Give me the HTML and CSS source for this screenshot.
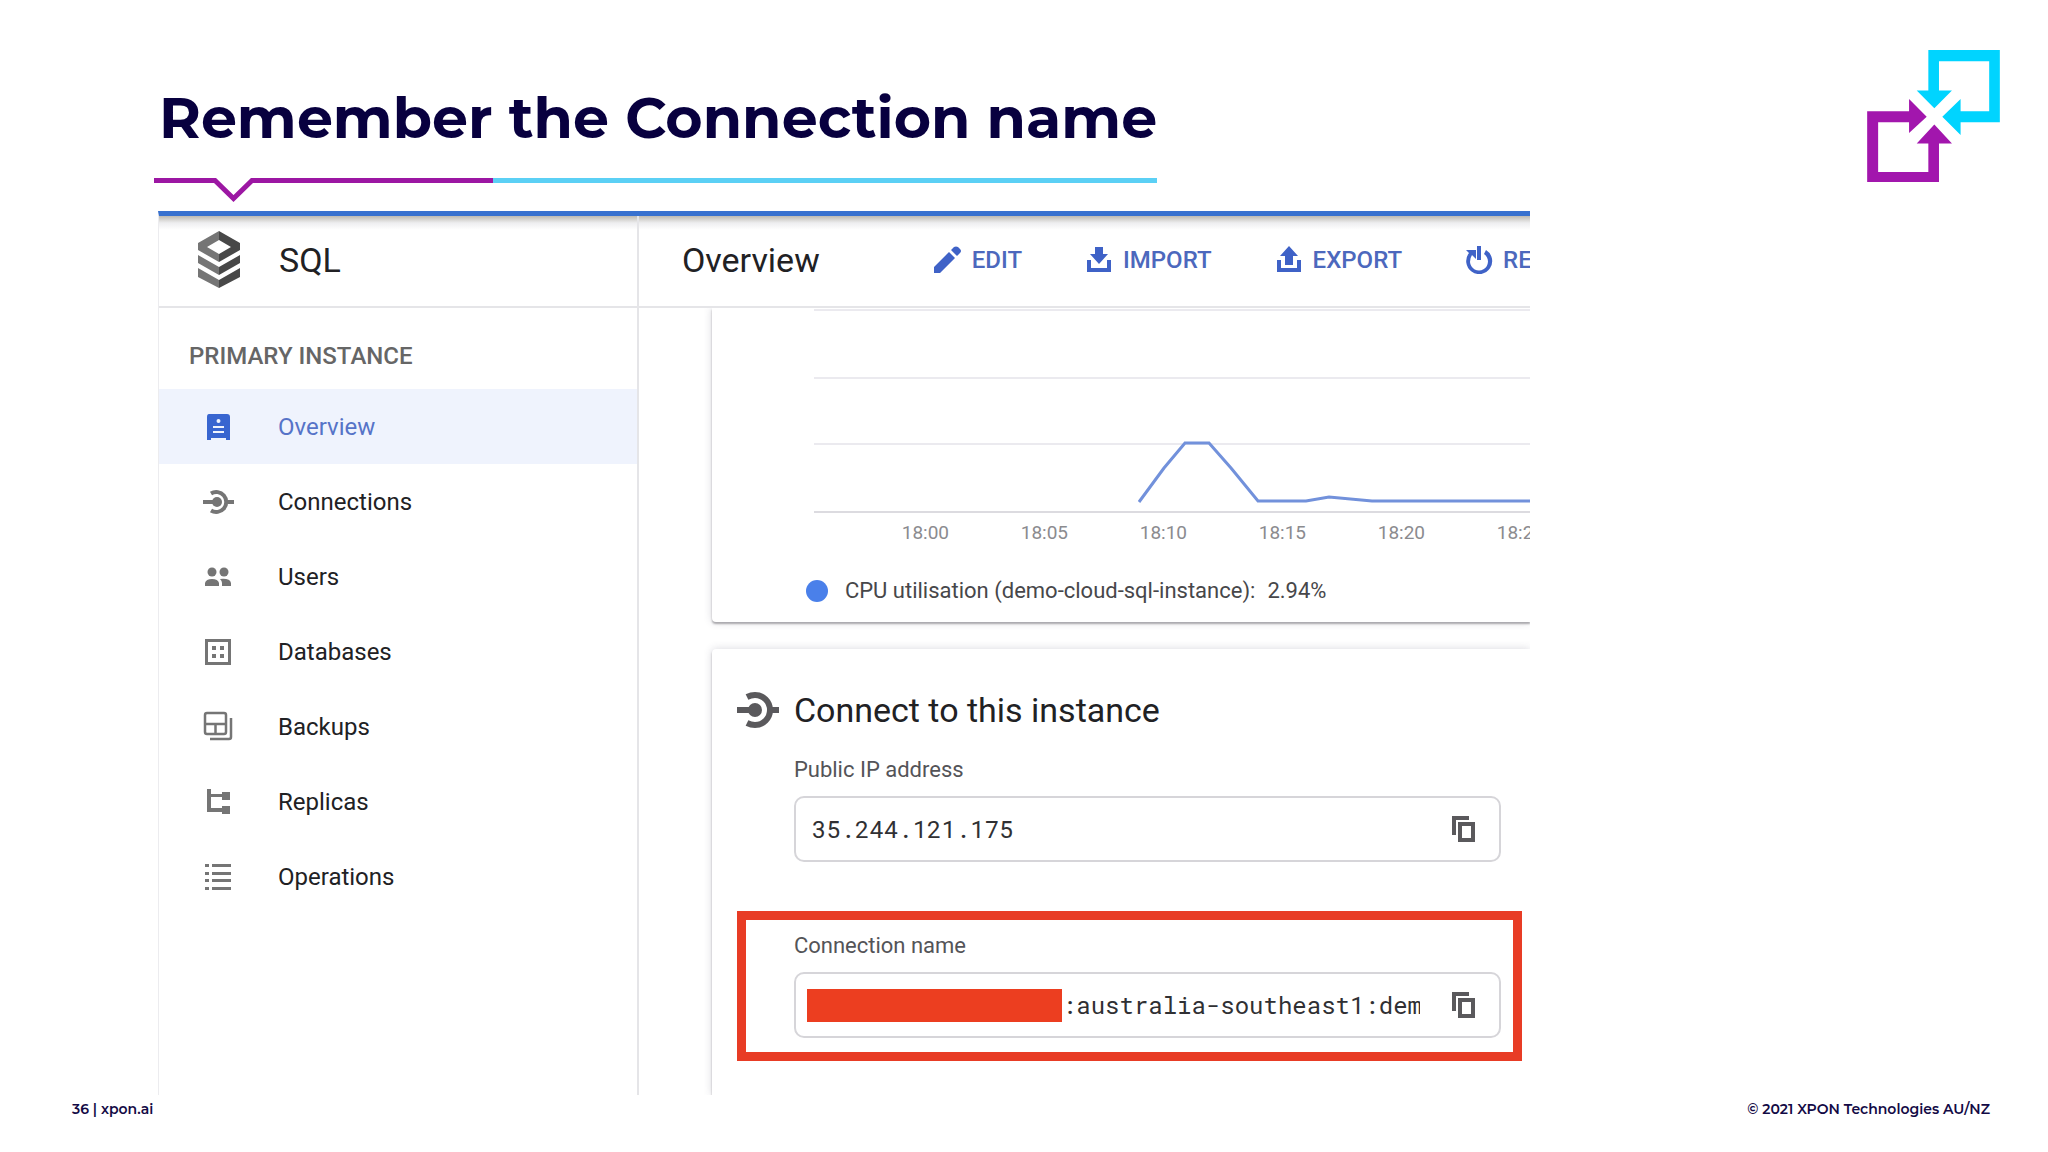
FILE: index.html
```html
<!DOCTYPE html>
<html lang="en">
<head>
    <meta charset="UTF-8">
    <meta name="viewport" content="width=device-width, initial-scale=1.0">
    <title>Remember the Connection name</title>
    <link rel="stylesheet" href="styles.css">
</head>
<body>
    <div class="slide">
        <header class="slide-header">
            <div class="title-block">
                <h1>Remember the Connection name</h1>
                <div class="title-rule">
                    <svg width="339" height="25" viewBox="0 0 339 25" fill="none" stroke="#9c17a3" stroke-width="5">
                        <path d="M0 2.5H61L79.500 20.500L98 2.500H339"/>
                    </svg>
                    <span class="rule-rest"></span>
                </div>
            </div>
            <svg class="logo" viewBox="81 60 399 397">
                <path fill="#00d4ff" d="M265 60H480V277H362V316L307 261L362 207V244H448V94H297V182H336L283 235L230 182H265Z"/>
                <path fill="#a216ad" d="M81 244H207V207L260 261L207 310V277H114V427H265V341H230L283 284L336 341H297V457H81Z"/>
            </svg>
        </header>

        <div class="console">
            <div class="product">
                <svg width="44" height="58" viewBox="0 0 44 58">
                    <path fill="#757575" d="M1 12L22 0V9L10 16L22 23V31L1 19Z"/>
                    <path fill="#484848" d="M43 12L22 0V9L34 16L22 23V31L43 19Z"/>
                    <path fill="#757575" d="M1 24L22 36V44L1 32ZM1 37L22 49V57L1 46Z"/>
                    <path fill="#484848" d="M43 24L22 36V44L43 32ZM43 37L22 49V57L43 46Z"/>
                </svg>
                <span>SQL</span>
            </div>

            <div class="toolbar">
                <h2>Overview</h2>
                <div class="actions">
                    <button type="button">
                        <svg width="28" height="28" viewBox="0 0 28 28"><path d="M0 21V27H6L21 12L15 6ZM17 4L23 10L26 7Q28 5 26 3L24 1Q22 0 20 1Z"/></svg>
                        EDIT
                    </button>
                    <button type="button">
                        <svg width="28" height="28" viewBox="0 0 28 28"><path d="M10 1H18V8H23L14 18L5 8H10ZM2 14H6V22H22V14H26V26H2Z"/></svg>
                        IMPORT
                    </button>
                    <button type="button">
                        <svg width="28" height="28" viewBox="0 0 28 28"><path d="M14 0L23 10H18V19H10V10H5ZM2 14H6V22H22V14H26V26H2Z"/></svg>
                        EXPORT
                    </button>
                    <button type="button">
                        <svg width="28" height="28" viewBox="0 0 28 28"><path d="M12 0H16V14H12ZM1 4H11V13L7 9Q5 12 5 16A9 9 0 1 0 19 8L21 4A13 13 0 1 1 4 7Z"/></svg>
                        RESTART
                    </button>
                </div>
            </div>

            <nav class="sidebar">
                <h3>PRIMARY INSTANCE</h3>
                <a href="#" class="active">
                    <svg width="32" height="32" viewBox="0 0 32 32"><path fill-rule="evenodd" d="M7 3H25Q28 3 28 6V29H24V27H9V29H5V6Q5 3 7 3ZM16.500 8A2 2 0 1 0 16.500 12A2 2 0 1 0 16.500 8ZM11 15V17H22V15ZM11 20V22H22V20Z"/></svg>
                    Overview
                </a>
                <a href="#">
                    <svg width="32" height="32" viewBox="0 0 32 32"><path fill="none" stroke="#757575" stroke-width="4" d="M1 16H15M26 16H32M9 7.500A10 10 0 1 1 9 24.500"/><circle cx="15" cy="16" r="5"/></svg>
                    Connections
                </a>
                <a href="#">
                    <svg width="32" height="32" viewBox="0 0 32 32"><circle cx="10" cy="11" r="4.500"/><circle cx="22" cy="11" r="4.500"/><path d="M3 25V22Q4 18 10 18Q16 18 17 22V25ZM18 18Q28 17 29 22V25H20V22Q20 20 18 18Z"/></svg>
                    Users
                </a>
                <a href="#">
                    <svg width="32" height="32" viewBox="0 0 32 32"><path fill-rule="evenodd" d="M3 3H29V29H3ZM6 6V26H26V6ZM10 10H14V14H10ZM18 10H22V14H18ZM10 18H14V22H10ZM18 18H22V22H18Z"/></svg>
                    Databases
                </a>
                <a href="#">
                    <svg width="32" height="32" viewBox="0 0 32 32"><g fill="none" stroke="#757575" stroke-width="2.500"><rect x="3" y="2" width="21" height="21" rx="2"/><path d="M3 13H24M13.500 13V23M29 7V26Q29 28 27 28H8"/></g></svg>
                    Backups
                </a>
                <a href="#">
                    <svg width="32" height="32" viewBox="0 0 32 32"><path d="M5 3H9V8H20V6H28V14H20V11H9V22H20V20H28V28H20V26H5Z"/></svg>
                    Replicas
                </a>
                <a href="#">
                    <svg width="32" height="32" viewBox="0 0 32 32"><path d="M3 3H7V6H3ZM10 3H29V6H10ZM3 11H7V14H3ZM10 11H29V14H10ZM3 18H7V21H3ZM10 18H29V21H10ZM3 26H7V29H3ZM10 26H29V29H10Z"/></svg>
                    Operations
                </a>
            </nav>

            <main class="content">
                <section class="card chart-card">
                    <svg class="chart" width="100%" height="206">
                        <g stroke="#ebeaef" stroke-width="2">
                            <line x1="0" y1="2" x2="100%" y2="2"/>
                            <line x1="0" y1="70" x2="100%" y2="70"/>
                            <line x1="0" y1="136" x2="100%" y2="136"/>
                        </g>
                        <line x1="0" y1="204" x2="100%" y2="204" stroke="#dcdbe0" stroke-width="2"/>
                        <polyline fill="none" stroke="#7291db" stroke-width="3" points="325,194 350,160 371,135 395,135 417,160 444,193 492,193 515,189 558,193 1200,193"/>
                    </svg>
                    <div class="ticks">
                        <span>18:00</span><span>18:05</span><span>18:10</span><span>18:15</span><span>18:20</span><span>18:25</span>
                    </div>
                    <div class="legend">
                        <span class="dot"></span>
                        <span>CPU utilisation (demo-cloud-sql-instance):</span>
                        <span>2.94%</span>
                    </div>
                </section>

                <section class="card connect-card">
                    <div class="connect-title">
                        <svg width="42" height="38" viewBox="0 0 42 38"><path fill="none" stroke="#5a595c" stroke-width="6" d="M0 19H16M33 19H42"/><path fill="none" stroke="#5a595c" stroke-width="6" d="M10 6Q14 4 18 4A15 15 0 1 1 18 34Q14 34 10 32"/><circle cx="18" cy="19" r="7" fill="#5a595c"/></svg>
                        <h2>Connect to this instance</h2>
                    </div>
                    <div class="field">
                        <label for="publicIp">Public IP address</label>
                        <div class="copy-box">
                            <input type="text" id="publicIp" value="35.244.121.175" readonly>
                            <button type="button" aria-label="Copy IP address">
                                <svg width="24" height="28" viewBox="0 0 24 28"><path fill-rule="evenodd" d="M0 1H17V5H4V20H0ZM6 7H23V27H6ZM10 11V23H19V11Z"/></svg>
                            </button>
                        </div>
                    </div>
                    <div class="field highlight">
                        <label for="connectionName">Connection name</label>
                        <div class="copy-box">
                            <span class="redacted"></span>
                            <input type="text" id="connectionName" value=":australia-southeast1:demo-cloud-sql-instance" readonly>
                            <button type="button" aria-label="Copy connection name">
                                <svg width="24" height="28" viewBox="0 0 24 28"><path fill-rule="evenodd" d="M0 1H17V5H4V20H0ZM6 7H23V27H6ZM10 11V23H19V11Z"/></svg>
                            </button>
                        </div>
                    </div>
                </section>
            </main>
        </div>

        <footer class="slide-footer">
            <span>36 | xpon.ai</span>
            <span>© 2021 XPON Technologies AU/NZ</span>
        </footer>
    </div>
</body>
</html>
```

FILE: styles.css
```css
* {
    box-sizing: border-box;
}
body {
    margin: 0;
    background-color: #fff;
    color: #212124;
    font-family: Roboto, Arial, sans-serif;
}
h1, h2, h3 {
    margin: 0;
}
svg {
    display: block;
    flex: none;
}
.slide {
    display: flex;
    flex-direction: column;
    min-height: 100vh;
}

/* slide heading */
.slide-header {
    display: flex;
    justify-content: space-between;
    align-items: flex-start;
    padding: 50px 48px 0 154px;
}
.title-block {
    padding-top: 32px;
}
h1 {
    padding-left: 5px;
    color: #08003f;
    font-family: Montserrat, Inter, sans-serif;
    font-size: 57px;
    line-height: 72px;
    font-weight: 700;
}
.title-rule {
    display: flex;
    height: 25px;
    margin-top: 24px;
}
.rule-rest {
    flex: 1;
    height: 5px;
    background-color: #5bd0f5;
}
.logo {
    width: 133px;
    height: 132px;
}

/* console */
.console {
    flex: 1;
    display: grid;
    grid-template-columns: 35% minmax(0, 1fr);
    grid-template-rows: auto 1fr;
    width: 67%;
    margin: 8px 0 0 158px;
    border-top: 5px solid #3871cf;
    border-left: 1px solid #ececef;
    overflow: hidden;
}
.product,
.toolbar {
    display: flex;
    align-items: center;
    height: 92px;
    padding-bottom: 2px;
    border-bottom: 2px solid #e5e5e8;
    background: linear-gradient(#bdbab2, #eeeef0 7px, #fff 14px);
}
.product {
    gap: 38px;
    padding-left: 38px;
    border-right: 2px solid #e5e5e8;
    font-size: 34px;
}
.toolbar {
    padding-left: 43px;
    overflow: hidden;
}
.toolbar h2,
.connect-title h2 {
    font-size: 34px;
    line-height: 40px;
    font-weight: 400;
}
.actions {
    display: flex;
    gap: 63px;
    margin-left: 114px;
}
button {
    padding: 0;
    border: none;
    background: none;
    cursor: pointer;
}
.actions button {
    display: flex;
    align-items: center;
    gap: 10px;
    color: #4c68bd;
    font-family: inherit;
    font-size: 24px;
    font-weight: 500;
}
.actions svg {
    fill: #3f62c7;
}

/* side menu */
.sidebar {
    padding-top: 32px;
    border-right: 2px solid #e5e5e8;
}
.sidebar h3 {
    padding-left: 30px;
    margin-bottom: 17px;
    color: #666;
    font-size: 24px;
    line-height: 32px;
    font-weight: 500;
}
.sidebar a {
    display: flex;
    align-items: center;
    gap: 44px;
    height: 75px;
    padding-left: 43px;
    color: #212124;
    font-size: 24px;
    text-decoration: none;
}
.sidebar a.active {
    background-color: #eff3fd;
    color: #5673c8;
}
.sidebar svg {
    fill: #757575;
}
.sidebar .active svg {
    fill: #3865d0;
}

/* cards */
.content {
    display: flex;
    flex-direction: column;
    gap: 27px;
    padding-left: 73px;
    overflow: hidden;
}
.card {
    background-color: #fff;
    box-shadow: 0 2px 2px #aaa9ad, 0 0 8px rgba(60, 60, 90, 0.2);
}
.chart-card {
    padding: 0 0 17px 102px;
    border-radius: 0 0 0 4px;
}
.ticks {
    display: flex;
    margin: 7px 0 0 52px;
    overflow: hidden;
    color: #8b8b8f;
    font-size: 19px;
    line-height: 24px;
}
.ticks span {
    flex: none;
    width: 119px;
    text-align: center;
}
.legend {
    display: flex;
    align-items: center;
    gap: 12px;
    margin: 32px 0 0 -8px;
    color: #47474a;
    font-size: 22px;
    line-height: 28px;
}
.dot {
    width: 22px;
    height: 22px;
    margin-right: 5px;
    border-radius: 50%;
    background-color: #4a80ea;
}
.connect-card {
    flex: 1;
    padding: 41px 8px 30px 25px;
    border-radius: 4px 0 0 0;
}
.connect-title {
    display: flex;
    align-items: center;
    gap: 15px;
    margin-bottom: 26px;
}
.field {
    display: flex;
    flex-direction: column;
    gap: 12px;
    padding: 0 21px 0 57px;
}
.field label {
    color: #545458;
    font-size: 22px;
    line-height: 28px;
}
.highlight {
    margin-top: 49px;
    padding: 12px 12px 14px 48px;
    border: 9px solid #e83c25;
}
.copy-box {
    display: flex;
    align-items: center;
    height: 66px;
    padding: 0 23px 0 16px;
    border: 2px solid #d6d5d9;
    border-radius: 10px;
}
.highlight .copy-box {
    padding-left: 11px;
}
.copy-box input {
    flex: 1;
    min-width: 0;
    margin-right: 32px;
    padding: 0;
    border: none;
    outline: none;
    background: none;
    color: #303033;
    font-family: "Roboto Mono", "DejaVu Sans Mono", monospace;
    font-size: 24px;
}
.copy-box svg {
    fill: #5a595c;
}
.redacted {
    flex: none;
    width: 255px;
    height: 33px;
    background-color: #ec3e20;
}

.slide-footer {
    display: flex;
    justify-content: space-between;
    padding: 1px 58px 30px 72px;
    color: #130a45;
    font-family: Montserrat, Inter, sans-serif;
    font-size: 14px;
    line-height: 26px;
    font-weight: 600;
}
```
